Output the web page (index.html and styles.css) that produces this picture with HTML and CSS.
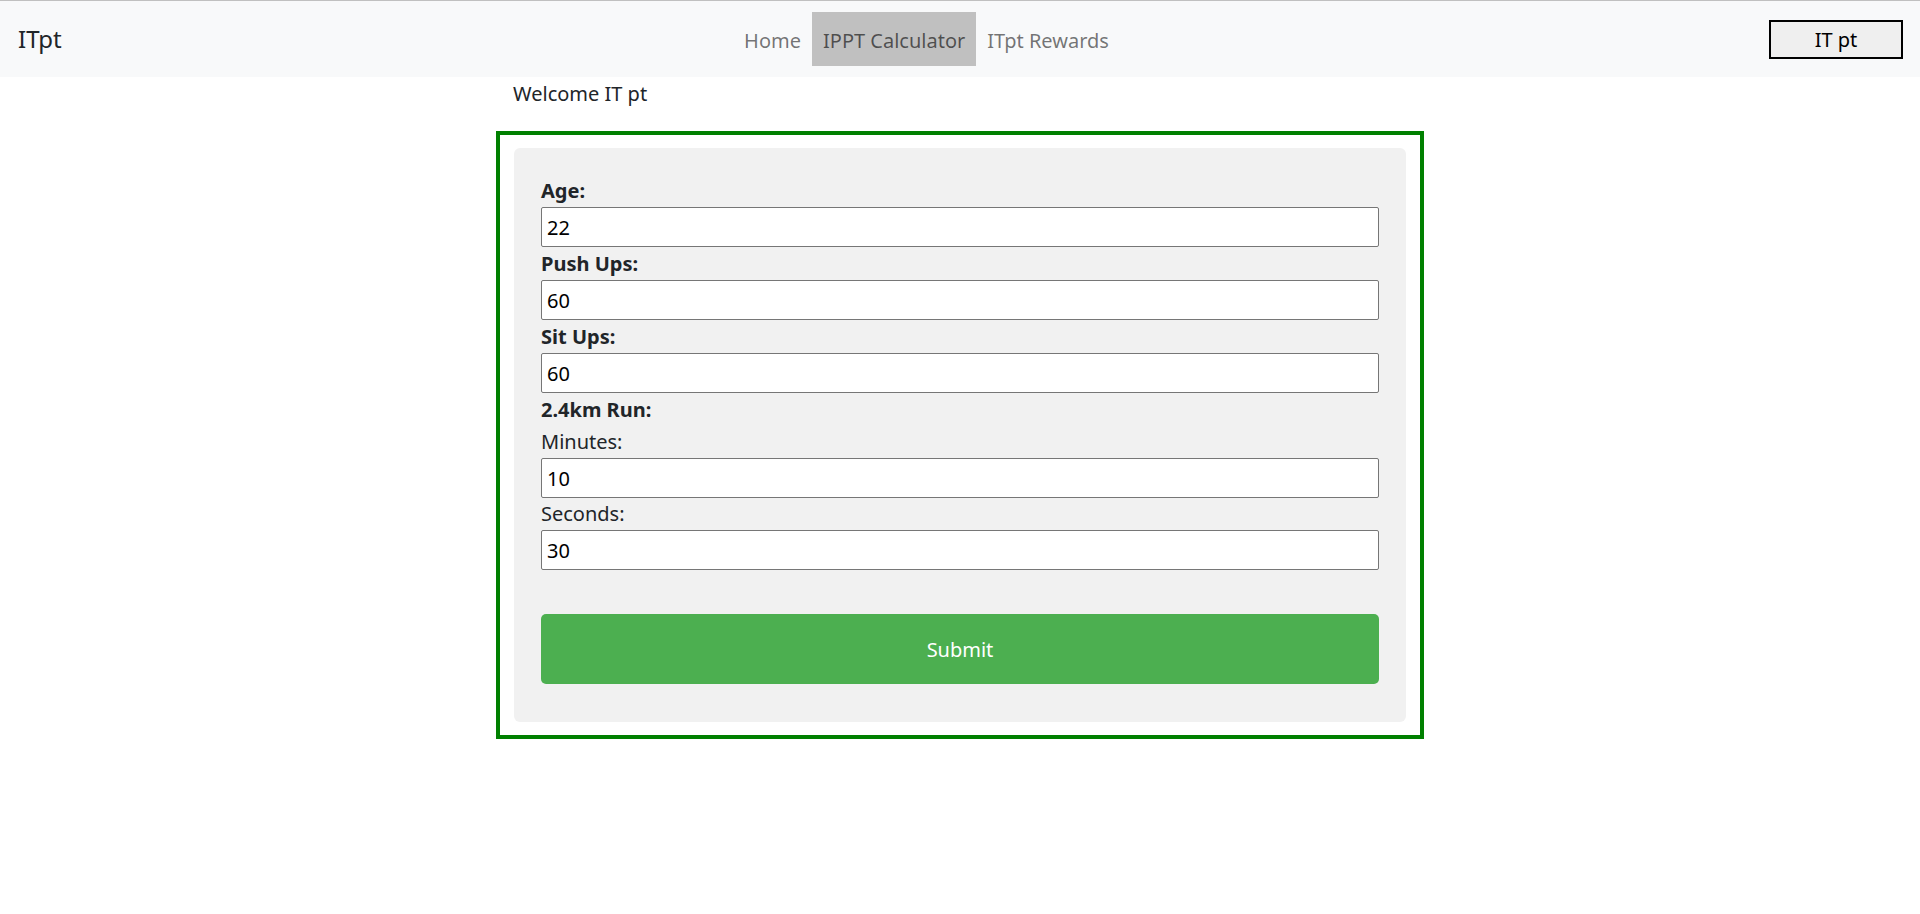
FILE: index.html
```html
<!DOCTYPE html>
<html lang="en">
<head>
<meta charset="utf-8">
<title>ITpt</title>
<link rel="stylesheet" href="styles.css">
</head>
<body>
<nav class="navbar">
  <a class="brand" href="#">ITpt</a>
  <ul class="nav-links">
    <li><a class="nav-link" href="#">Home</a></li>
    <li><a class="nav-link active" href="#">IPPT Calculator</a></li>
    <li><a class="nav-link" href="#">ITpt Rewards</a></li>
  </ul>
  <button class="user-btn" type="button">IT pt</button>
</nav>
<main class="container">
  <p class="welcome">Welcome IT pt</p>
  <div class="frame">
    <form class="card">
      <label class="label" for="age">Age:</label>
      <input class="field" id="age" type="text" value="22">
      <label class="label" for="push">Push Ups:</label>
      <input class="field" id="push" type="text" value="60">
      <label class="label" for="sit">Sit Ups:</label>
      <input class="field" id="sit" type="text" value="60">
      <span class="label">2.4km Run:</span>
      <label class="sublabel" for="min">Minutes:</label>
      <input class="field" id="min" type="text" value="10">
      <label class="sublabel" for="sec">Seconds:</label>
      <input class="field" id="sec" type="text" value="30">
      <button class="submit" type="button">Submit</button>
    </form>
  </div>
</main>
</body>
</html>
```
FILE: styles.css
```css
* { box-sizing: border-box; }
html, body { margin: 0; padding: 0; }
body {
  font-family: "Noto Sans", "Open Sans", sans-serif;
  color: #212529;
  background: #fff;
  font-size: 20px;
}
.navbar {
  display: flex;
  align-items: center;
  height: 77px;
  border-top: 1px solid #c0c0c0;
  background: #f8f9fa;
  padding: 0 17px 0 18px;
}
.brand {
  font-size: 24px;
  color: #212529;
  text-decoration: none;
  width: 66px;
  line-height: 1;
}
.nav-links {
  flex: 1;
  display: flex;
  justify-content: center;
  list-style: none;
  margin: 0;
  padding: 0;
}
.nav-link {
  display: block;
  height: 54px;
  line-height: 50px;
  padding: 4px 11px 0;
  color: rgba(0, 0, 0, 0.55);
  text-decoration: none;
  font-size: 20px;
}
.nav-link.active {
  background: #c0c0c0;
  color: rgba(0, 0, 0, 0.6);
}
.user-btn {
  width: 134px;
  height: 39px;
  border: 2px solid #000;
  background: #efefef;
  font-family: inherit;
  font-size: 20px;
  color: #000;
  padding: 0;
}
.container {
  width: 928px;
  margin: 0 auto;
}
.welcome {
  margin: 2px 0 22px;
  padding-left: 17px;
  line-height: 30px;
}
.frame {
  border: 4px solid #008000;
  padding: 13px 14px;
}
.card {
  display: flex;
  flex-direction: column;
  background: #f1f1f1;
  border-radius: 6px;
  padding: 26px 27px 38px;
}
.label {
  display: block;
  font-weight: bold;
  line-height: 33px;
}
.sublabel {
  display: block;
  line-height: 32px;
}
.field {
  display: block;
  width: 100%;
  height: 40px;
  border: 1px solid #767676;
  border-radius: 2px;
  padding: 0 5px;
  font-family: inherit;
  font-size: 20px;
  color: #000;
  background: #fff;
}
.submit {
  margin-top: 44px;
  width: 100%;
  height: 70px;
  border: none;
  border-radius: 5px;
  background: #4caf50;
  color: #fff;
  font-family: inherit;
  font-size: 20px;
}
```
